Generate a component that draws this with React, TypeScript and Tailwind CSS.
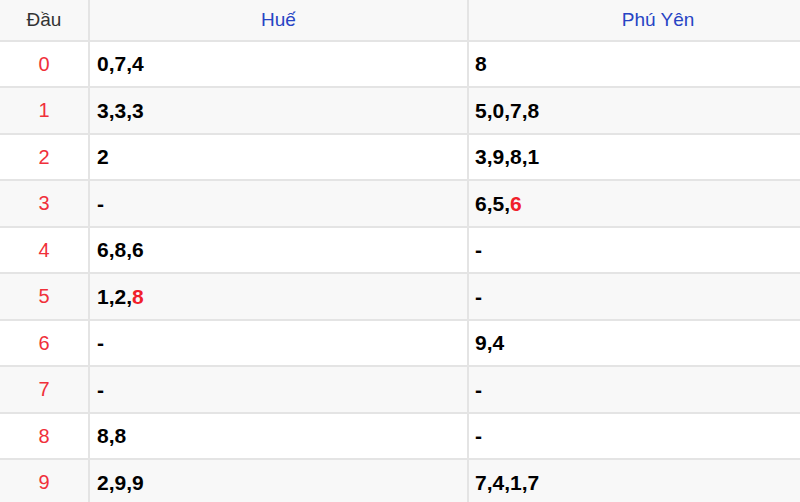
import React from 'react';

const rows: { dau: string; hue: React.ReactNode; py: React.ReactNode }[] = [
  { dau: '0', hue: '0,7,4', py: '8' },
  { dau: '1', hue: '3,3,3', py: '5,0,7,8' },
  { dau: '2', hue: '2', py: '3,9,8,1' },
  { dau: '3', hue: '-', py: <>6,5,<span className="text-[#f0202a]">6</span></> },
  { dau: '4', hue: '6,8,6', py: '-' },
  { dau: '5', hue: <>1,2,<span className="text-[#f0202a]">8</span></>, py: '-' },
  { dau: '6', hue: '-', py: '9,4' },
  { dau: '7', hue: '-', py: '-' },
  { dau: '8', hue: '8,8', py: '-' },
  { dau: '9', hue: '2,9,9', py: '7,4,1,7' },
];

export default function App() {
  return (
    <div className="w-[800px] h-[502px] overflow-hidden bg-white font-['Liberation_Sans',Arial,sans-serif]">
      <div className="w-[847px] grid grid-cols-[90px_379px_378px]">
        <div className="h-[41.5px] flex items-center justify-center bg-[#f8f8f8] border-b-2 border-r-2 border-[#e4e4e4] text-[19px] text-[#333]">Đầu</div>
        <div className="h-[41.5px] flex items-center justify-center bg-[#f8f8f8] border-b-2 border-r-2 border-[#e4e4e4] text-[19px] text-[#2744c4]">Huế</div>
        <div className="h-[41.5px] flex items-center justify-center bg-[#f8f8f8] border-b-2 border-[#e4e4e4] text-[19px] text-[#2744c4]">Phú Yên</div>
        {rows.map((r, i) => {
          const bg = i % 2 === 1 ? 'bg-[#f8f8f8]' : 'bg-white';
          return (
            <React.Fragment key={r.dau}>
              <div className={`h-[46.5px] flex items-center justify-center border-b-2 border-r-2 border-[#e4e4e4] text-[20px] text-[#f0303a] ${bg}`}>{r.dau}</div>
              <div className={`h-[46.5px] flex items-center pl-[7px] border-b-2 border-r-2 border-[#e4e4e4] text-[21px] font-bold text-black ${bg}`}>{r.hue}</div>
              <div className={`h-[46.5px] flex items-center pl-[6px] border-b-2 border-[#e4e4e4] text-[21px] font-bold text-black ${bg}`}>{r.py}</div>
            </React.Fragment>
          );
        })}
      </div>
    </div>
  );
}
